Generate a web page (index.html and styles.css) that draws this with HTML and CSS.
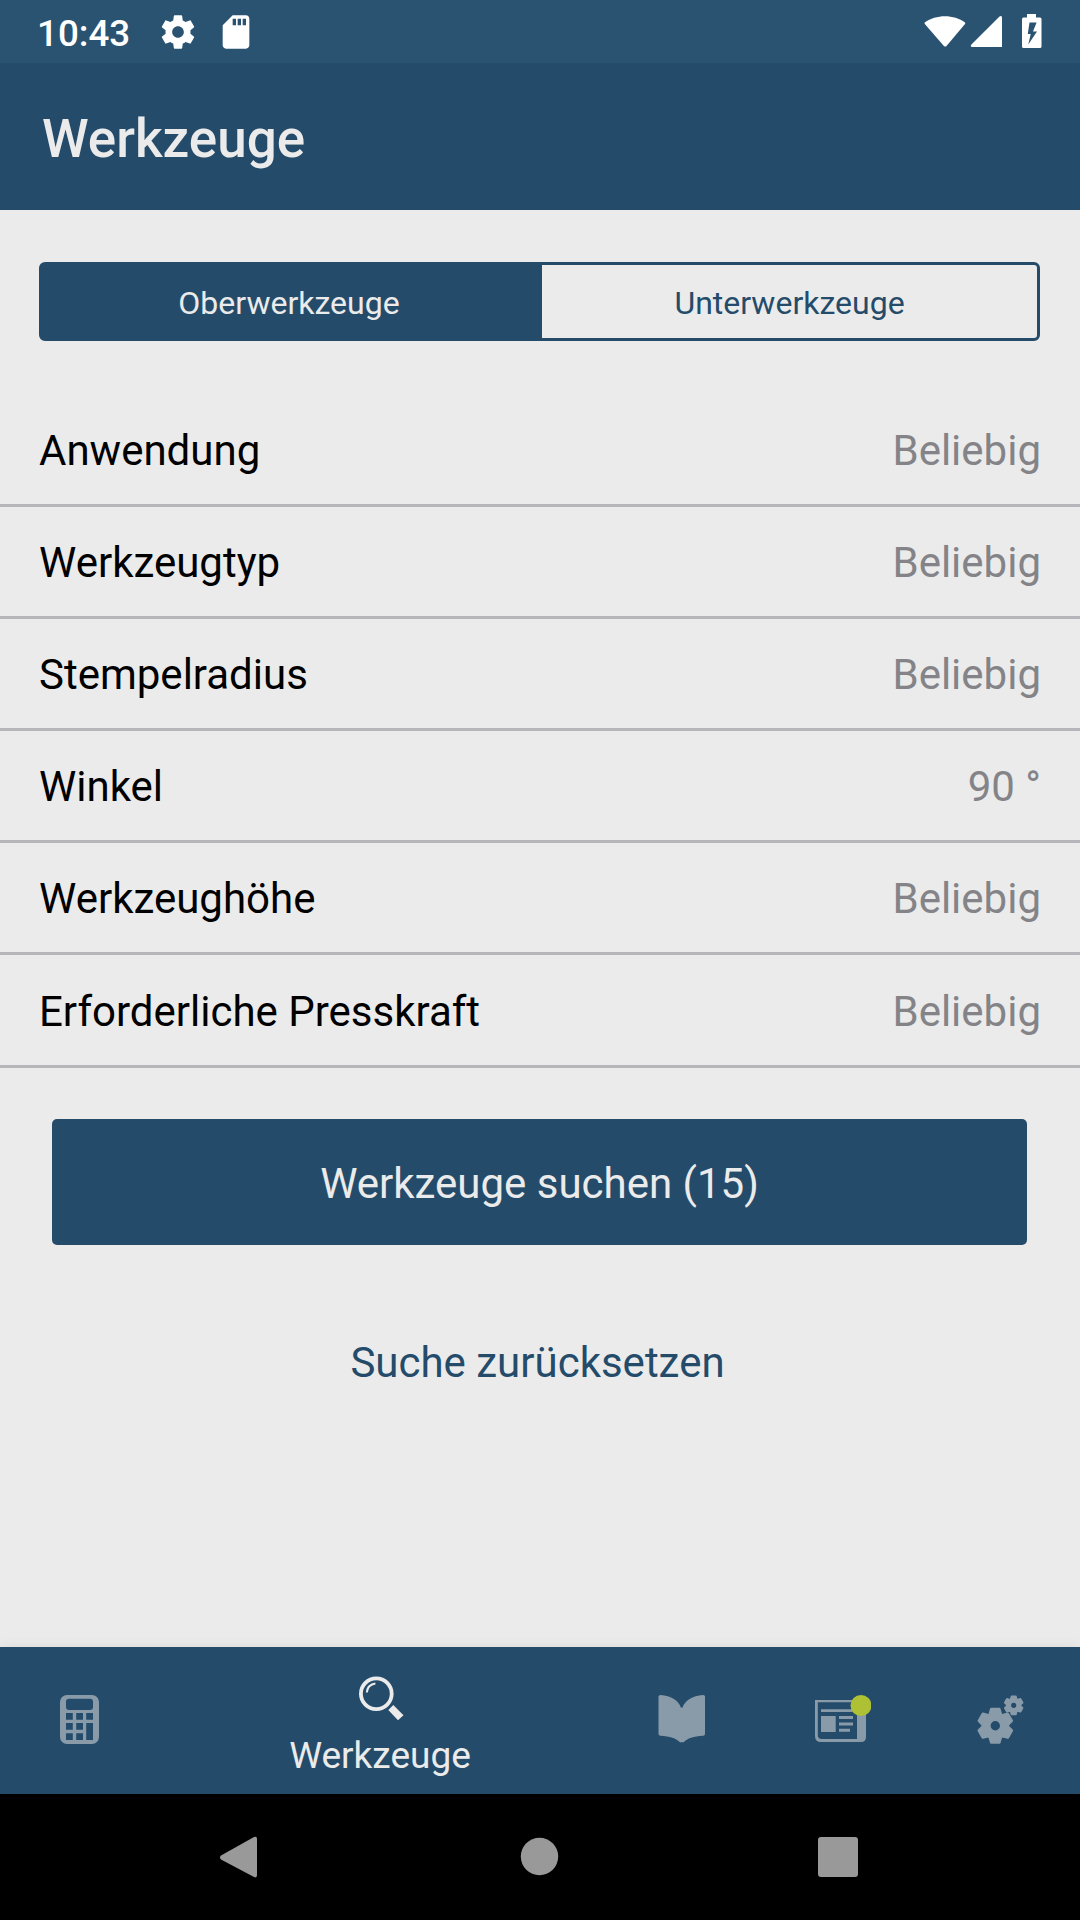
FILE: index.html
```html
<!DOCTYPE html>
<html lang="de">
<head>
    <meta charset="UTF-8">
    <meta name="viewport" content="width=device-width, initial-scale=1.0">
    <title>Werkzeuge</title>
    <link rel="stylesheet" href="styles.css">
</head>
<body>
    <div class="status-bar">
        <span class="time">10:43</span>
        <svg class="status-gear" width="40" height="40" viewBox="0 0 24 24"><path d="M19.43 12.98c.04-.32.07-.64.07-.98s-.03-.66-.07-.98l2.11-1.65c.19-.15.24-.42.12-.64l-2-3.46c-.12-.22-.39-.3-.61-.22l-2.49 1c-.52-.4-1.08-.73-1.69-.98l-.38-2.65C14.46 2.18 14.25 2 14 2h-4c-.25 0-.46.18-.49.42l-.38 2.65c-.61.25-1.17.59-1.69.98l-2.49-1c-.23-.09-.49 0-.61.22l-2 3.46c-.13.22-.07.49.12.64l2.11 1.65c-.04.32-.07.65-.07.98s.03.66.07.98l-2.11 1.65c-.19.15-.24.42-.12.64l2 3.46c.12.22.39.3.61.22l2.49-1c.52.4 1.08.73 1.69.98l.38 2.65c.03.24.24.42.49.42h4c.25 0 .46-.18.49-.42l.38-2.65c.61-.25 1.17-.59 1.69-.98l2.49 1c.23.09.49 0 .61-.22l2-3.46c.12-.22.07-.49-.12-.64l-2.11-1.65zM12 15.5c-1.93 0-3.5-1.57-3.5-3.5s1.57-3.5 3.5-3.5 3.5 1.57 3.5 3.5-1.57 3.5-3.5 3.5z"/></svg>
        <svg class="status-sd" width="40" height="40" viewBox="0 0 24 24"><path d="M18 2h-8L4.020 8 4 20c0 1.100.9 2 2 2h12c1.100 0 2-.9 2-2V4c0-1.100-.9-2-2-2zm-6 6h-2V4h2v4zm3 0h-2V4h2v4zm3 0h-2V4h2v4z"/></svg>
        <svg class="status-system" width="120" height="36" viewBox="0 0 120 36">
            <path d="M.7 8.500C12 .2 30 .2 41 8.500q.6.7 0 1.500L22.500 32q-1.300 1.200-2.600 0L.8 10q-.6-.8-.1-1.500z"/>
            <path d="M78 3.200V33H48q-2-.3-.8-2.200L75.500 2.600q2-1.200 2.500.6z"/>
            <path fill-rule="evenodd" d="M103 0h9v3.500h4q1.500 0 1.500 1.500v27.500q0 1.500-1.500 1.500H99.500q-1.500 0-1.500-1.500V5q0-1.500 1.500-1.500h3.500zM105.500 8.500 103.800 20h2.900l-2.400 10.500 8.700-13h-4l3.600-9z"/>
        </svg>
    </div>

    <header>
        <h1>Werkzeuge</h1>
    </header>

    <main>
        <div class="segments">
            <button class="segment selected">Oberwerkzeuge</button>
            <button class="segment">Unterwerkzeuge</button>
        </div>

        <ul class="filters">
            <li><span>Anwendung</span><span class="value">Beliebig</span></li>
            <li><span>Werkzeugtyp</span><span class="value">Beliebig</span></li>
            <li><span>Stempelradius</span><span class="value">Beliebig</span></li>
            <li><span>Winkel</span><span class="value">90 °</span></li>
            <li><span>Werkzeughöhe</span><span class="value">Beliebig</span></li>
            <li><span>Erforderliche Presskraft</span><span class="value">Beliebig</span></li>
        </ul>

        <button class="search">Werkzeuge suchen (15)</button>
        <button class="reset">Suche zurücksetzen</button>
    </main>

    <nav class="tabs">
        <a class="tab">
            <svg width="64" height="64" viewBox="0 0 64 64">
                <path fill-rule="evenodd" d="M20 7h25a7 7 0 0 1 7 7v35a7 7 0 0 1-7 7H20a7 7 0 0 1-7-7V14a7 7 0 0 1 7-7zM22 10.700a3 3 0 0 0-3 3V19a3 3 0 0 0 3 3h21a3 3 0 0 0 3-3v-5.300a3 3 0 0 0-3-3zM19 25v6.800h6.800V25zM29.200 25v6.800H36V25zM39.200 25v6.800H46V25zM19 35v6.800h6.800V35zM29.200 35v6.800H36V35zM39.200 35v17H46V35zM19 45.200V52h6.800v-6.800zM29.200 45.200V52H36v-6.800z"/>
            </svg>
        </a>
        <a class="tab active">
            <svg width="64" height="64" viewBox="0 0 64 64">
                <circle class="line" cx="28.300" cy="29.700" r="15.400" stroke-width="3.800"/>
                <path class="line" d="M18.800 28.500Q19.500 20.500 27.400 19.400" stroke-width="2"/>
                <path d="M45.300 41 40.300 46 50 56.300 55.500 51.200z"/>
            </svg>
            <span class="label">Werkzeuge</span>
        </a>
        <a class="tab">
            <svg width="64" height="64" viewBox="0 0 64 64">
                <path d="M9.500 8.500Q9.500 7 11.500 7C22 7.600 30 13 31.800 19.500H33.600C35.500 13 43.500 7.600 54 7Q56 7 56 8.500V46Q56 47.500 54 47.700C44.500 48.300 38.500 50 34.300 54.600L32.700 54 31.200 54.600C27 50 21 48.300 11.500 47.700Q9.500 47.500 9.500 46z"/>
            </svg>
        </a>
        <a class="tab">
            <svg width="64" height="64" viewBox="0 0 64 64">
                <path fill-rule="evenodd" d="M8 12h44v10h7v27q0 5-5 5H14q-6 0-6-6zM10.800 14.300V47q0 4 4 4H50V14.300z"/>
                <path d="M14 21.300h31.500V24H14zM14 28h14.700v16H14zM32 28h14v2.900H32zM32 34.500h14v3H32zM32 40.800h11v3H32z"/>
                <circle class="badge" cx="54" cy="17.500" r="10.500"/>
            </svg>
        </a>
        <a class="tab">
            <svg width="64" height="64" viewBox="0 0 64 64">
                <defs>
                    <path id="tooth" d="M-7-11-5.300-17Q-5-18-4-18H4Q5-18 5.300-17L7-11z"/>
                    <g id="cog">
                        <circle class="ring" r="9.200"/>
                        <use href="#tooth"/>
                        <use href="#tooth" transform="rotate(60)"/>
                        <use href="#tooth" transform="rotate(120)"/>
                        <use href="#tooth" transform="rotate(180)"/>
                        <use href="#tooth" transform="rotate(240)"/>
                        <use href="#tooth" transform="rotate(300)"/>
                    </g>
                </defs>
                <use href="#cog" transform="translate(30.300 37.700)"/>
                <use href="#cog" transform="translate(48.700 17.300) scale(.55)"/>
            </svg>
        </a>
    </nav>

    <div class="system-nav">
        <svg width="64" height="64" viewBox="0 0 64 64"><path d="M14 30.500 47 12q3-1.300 3 2V50q0 3.500-3 2L14 34.500q-2-2 0-4z"/></svg>
        <svg width="64" height="64" viewBox="0 0 64 64"><circle cx="32.500" cy="31.500" r="18.700"/></svg>
        <svg width="64" height="64" viewBox="0 0 64 64"><rect x="12" y="12" width="40" height="40" rx="3"/></svg>
    </div>
</body>
</html>
```

FILE: styles.css
```css
/* General Styles */
* {
    box-sizing: border-box;
}

body {
    margin: 0;
    height: 1920px;
    font-family: Roboto, sans-serif;
    font-size: 42px;
    background: #ebebeb;
    display: flex;
    flex-direction: column;
    overflow: hidden;
}

button {
    font: inherit;
    border: none;
    padding: 0;
    background: none;
}

svg {
    display: block;
    flex: none;
}

/* Status bar and Header */
.status-bar {
    height: 63px;
    padding: 0 36px 0 37px;
    display: flex;
    align-items: center;
    background: #2a5271;
    color: white;
    fill: white;
}

.time {
    width: 121px;
    font-size: 36.75px;
    font-weight: 500;
    padding-top: 3px;
}

.status-sd {
    margin-left: 18px;
}

.status-system {
    margin-left: auto;
}

header {
    height: 147px;
    padding: 0 42px;
    display: flex;
    align-items: center;
    background: #254b6a;
}

h1 {
    margin: 0;
    padding-top: 4px;
    color: #ebebeb;
    font-size: 53px;
    font-weight: 500;
}

main {
    flex: 1;
    display: flex;
    flex-direction: column;
}

/* Segmented control */
.segments {
    height: 79px;
    margin: 52px 40px 0 39px;
    display: flex;
    flex: none;
    border: 3px solid #254b6a;
    border-radius: 6px;
}

.segment {
    flex: 1;
    font-size: 32px;
    padding-top: 3px;
    color: #254b6a;
}

.segment.selected {
    flex: none;
    width: 500px;
    padding-right: 6px;
    background: #254b6a;
    color: #ebebeb;
}

/* Filter list */
.filters {
    list-style: none;
    margin: 54px 0 0;
    padding: 0;
}

.filters li {
    height: 112px;
    padding: 2px 39px 0;
    display: flex;
    justify-content: space-between;
    align-items: center;
    border-bottom: 3px solid #b6b6ba;
    color: black;
}

.filters li:last-child {
    height: 113px;
}

.filters .value {
    color: #848488;
}

/* Actions */
.search {
    height: 126px;
    margin: 51px 53px 0 52px;
    padding-top: 3px;
    border-radius: 5px;
    background: #254b6a;
    color: #ebebeb;
}

.reset {
    height: 126px;
    margin: 54px 57px 0 52px;
    color: #254b6a;
}

/* Tab bar */
.tabs {
    height: 147px;
    padding-right: 4px;
    display: flex;
    background: #254b6a;
    box-shadow: 0 0 12px rgba(0, 0, 0, 0.08);
}

.tab {
    width: 158px;
    padding-top: 41px;
    display: flex;
    flex-direction: column;
    align-items: center;
    fill: #899ba9;
}

.tab.active {
    flex: 1;
    padding-top: 17px;
    color: #ebebeb;
    fill: #ebebeb;
    font-size: 37px;
}

.tab .label {
    margin-top: 6px;
}

.tab .line {
    fill: none;
    stroke: #ebebeb;
}

.tab .ring {
    fill: none;
    stroke: #899ba9;
    stroke-width: 9px;
}

.tab .badge {
    fill: #aec135;
}

/* System navigation */
.system-nav {
    height: 126px;
    padding: 0 210px 0 207px;
    display: flex;
    align-items: center;
    justify-content: space-between;
    background: black;
    fill: #999;
}
```
